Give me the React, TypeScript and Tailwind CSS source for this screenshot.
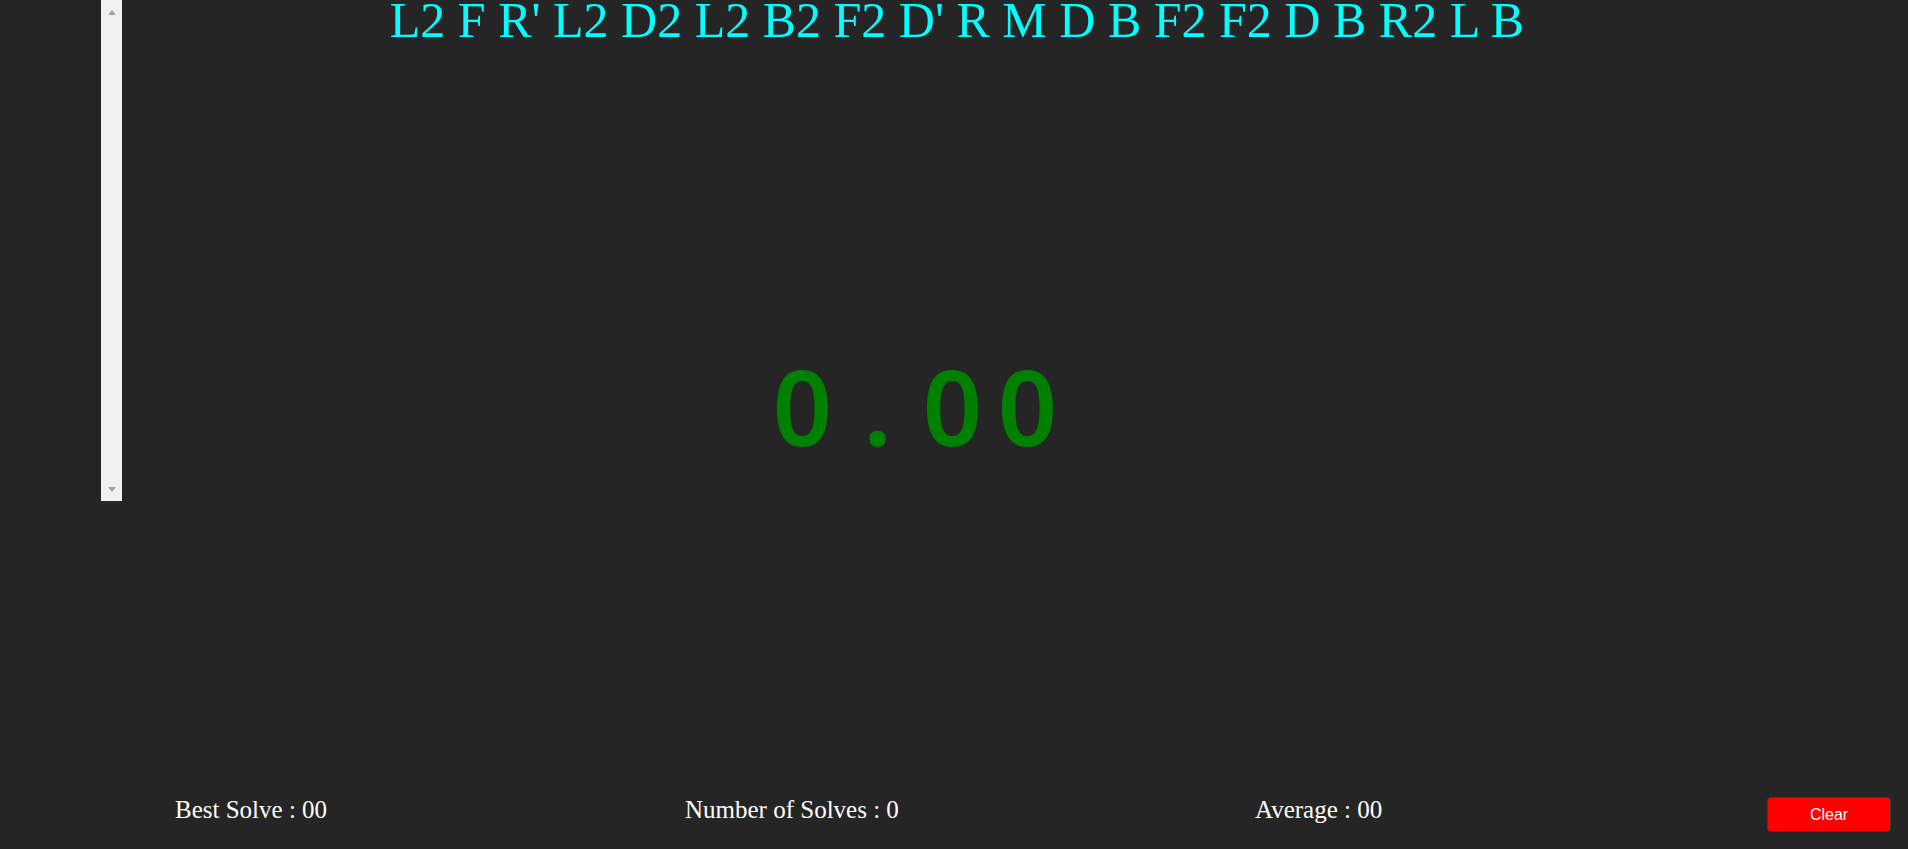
import React from "react";

const scramble = "L2 F R' L2 D2 L2 B2 F2 D' R M D B F2 F2 D B R2 L B";
const timeChars = ["0", ".", "0", "0"];

export default function App() {
  return (
    <div className="h-[849px] bg-[#262526] flex flex-col overflow-hidden">
      {/* top area: times list, scramble and timer stacked in one grid cell */}
      <div className="grid">
        <div className="[grid-area:1/1] pl-[101px]">
          {/* times list, only its scrollbar shows */}
          <div className="w-[21px] h-[501px] bg-[#f1f1f1] flex flex-col items-center justify-between pt-[10px] pb-[9px]">
            <span className="w-0 h-0 border-l-[4px] border-r-[4px] border-b-[5px] border-l-transparent border-r-transparent border-b-[#a3a3a3]" />
            <span className="w-0 h-0 border-l-[4px] border-r-[4px] border-t-[5px] border-l-transparent border-r-transparent border-t-[#a3a3a3]" />
          </div>
        </div>

        <h1 className="[grid-area:1/1] self-start text-center text-[50px] leading-[40px] text-[#00ffff] font-['Liberation_Serif',serif] whitespace-nowrap pl-[6px]">
          {scramble}
        </h1>

        <div className="[grid-area:1/1] self-start mt-[354px] flex justify-center pr-[78px]">
          <div className="flex text-[104px] leading-none font-semibold text-[#008000] font-['Noto_Sans',sans-serif]">
            {timeChars.map((c, i) => (
              <span key={i} className="w-[75px] text-center">
                {c}
              </span>
            ))}
          </div>
        </div>
      </div>

      {/* stats row */}
      <div className="mt-auto flex items-start pb-[17px] pl-[175px] pr-[17px] text-white font-['Liberation_Serif',serif] text-[25px] leading-[25px]">
        <div className="w-[510px]">Best Solve : 00</div>
        <div className="w-[570px]">Number of Solves : 0</div>
        <div className="flex-1">Average : 00</div>
        <button className="w-[124px] h-[35px] bg-[#ff0000] border border-[#3c3c3c] rounded-[4px] text-white text-[16px] font-['Liberation_Sans',sans-serif] leading-none">
          Clear
        </button>
      </div>
    </div>
  );
}
